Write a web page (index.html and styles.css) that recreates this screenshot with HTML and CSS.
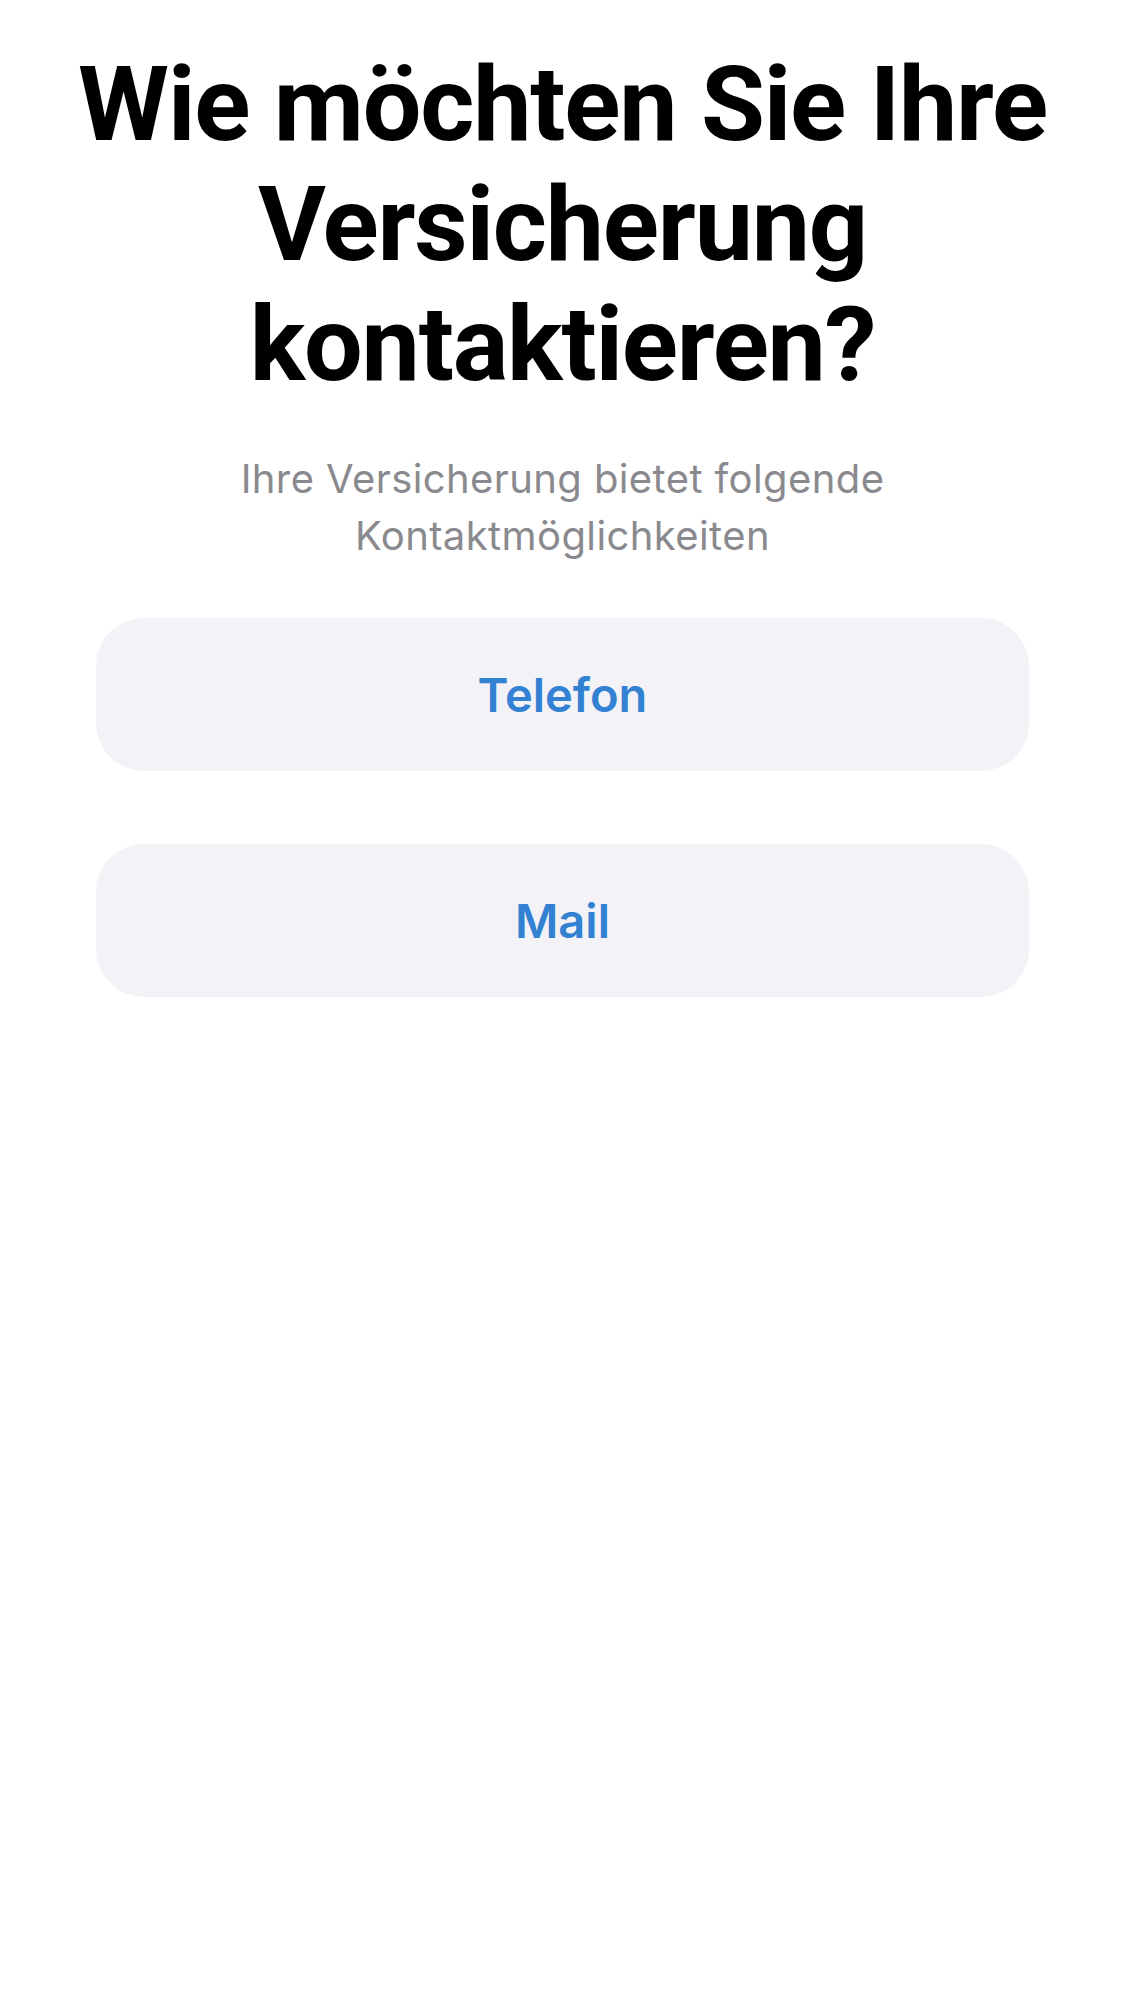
FILE: index.html
```html
<!DOCTYPE html>
<html lang="de">
<head>
<meta charset="utf-8">
<title>Kontakt</title>
<link rel="stylesheet" href="styles.css">
</head>
<body>
<main class="screen">
  <h1 class="title">Wie möchten Sie Ihre<br>Versicherung<br>kontaktieren?</h1>
  <p class="subtitle">Ihre Versicherung bietet folgende<br>Kontaktmöglichkeiten</p>
  <div class="actions">
    <button class="action" type="button">Telefon</button>
    <button class="action" type="button">Mail</button>
  </div>
</main>
</body>
</html>
```
FILE: styles.css
```css
html, body {
  margin: 0;
  padding: 0;
  background: #ffffff;
}
body {
  font-family: Inter, "Noto Sans", "Liberation Sans", sans-serif;
  width: 1125px;
  height: 2001px;
}
.screen {
  display: flex;
  flex-direction: column;
  align-items: center;
  padding: 45px 40px 0;
}
.title {
  margin: 0;
  font-family: Roboto, Inter, "Liberation Sans", sans-serif;
  font-size: 104px;
  line-height: 120px;
  font-weight: 700;
  color: #000000;
  text-align: center;
  letter-spacing: -1.2px;
  white-space: nowrap;
}
.subtitle {
  margin: 45px 0 0;
  font-size: 40px;
  line-height: 57px;
  font-weight: 400;
  color: #8a8a8e;
  text-align: center;
  letter-spacing: 0.4px;
}
.actions {
  margin-top: 54px;
  width: 933px;
  display: flex;
  flex-direction: column;
  gap: 73px;
}
.action {
  height: 153px;
  border: none;
  border-radius: 48px;
  background: #f2f2f7;
  color: #3281d2;
  font-family: Inter, "Noto Sans", "Liberation Sans", sans-serif;
  font-size: 47px;
  font-weight: 600;
  padding: 0;
  cursor: pointer;
}
```
